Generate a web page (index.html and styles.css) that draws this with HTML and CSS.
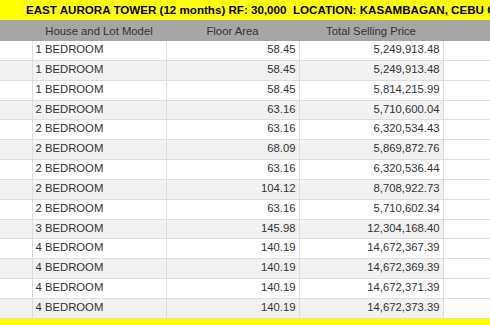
FILE: index.html
```html
<!DOCTYPE html>
<html lang="en">
<head>
  <meta charset="UTF-8" />
  <title>East Aurora Tower</title>
  <link rel="stylesheet" href="styles.css">
</head>
<body>
  <div class="title-bar">EAST AURORA TOWER (12 months) RF: 30,000&nbsp; LOCATION: KASAMBAGAN, CEBU CITY</div>
  <table class="price-list">
    <colgroup>
      <col class="c-idx">
      <col class="c-model">
      <col class="c-area">
      <col class="c-price">
      <col>
    </colgroup>
    <thead>
      <tr>
        <th></th>
        <th>House and Lot Model</th>
        <th>Floor Area</th>
        <th>Total Selling Price</th>
        <th></th>
      </tr>
    </thead>
    <tbody>
      <tr><td></td><td>1 BEDROOM</td><td class="num">58.45</td><td class="num">5,249,913.48</td><td class="blank"></td></tr>
      <tr><td></td><td>1 BEDROOM</td><td class="num">58.45</td><td class="num">5,249,913.48</td><td class="blank"></td></tr>
      <tr><td></td><td>1 BEDROOM</td><td class="num">58.45</td><td class="num">5,814,215.99</td><td class="blank"></td></tr>
      <tr><td></td><td>2 BEDROOM</td><td class="num">63.16</td><td class="num">5,710,600.04</td><td class="blank"></td></tr>
      <tr><td></td><td>2 BEDROOM</td><td class="num">63.16</td><td class="num">6,320,534.43</td><td class="blank"></td></tr>
      <tr><td></td><td>2 BEDROOM</td><td class="num">68.09</td><td class="num">5,869,872.76</td><td class="blank"></td></tr>
      <tr><td></td><td>2 BEDROOM</td><td class="num">63.16</td><td class="num">6,320,536.44</td><td class="blank"></td></tr>
      <tr><td></td><td>2 BEDROOM</td><td class="num">104.12</td><td class="num">8,708,922.73</td><td class="blank"></td></tr>
      <tr><td></td><td>2 BEDROOM</td><td class="num">63.16</td><td class="num">5,710,602.34</td><td class="blank"></td></tr>
      <tr><td></td><td>3 BEDROOM</td><td class="num">145.98</td><td class="num">12,304,168.40</td><td class="blank"></td></tr>
      <tr><td></td><td>4 BEDROOM</td><td class="num">140.19</td><td class="num">14,672,367.39</td><td class="blank"></td></tr>
      <tr><td></td><td>4 BEDROOM</td><td class="num">140.19</td><td class="num">14,672,369.39</td><td class="blank"></td></tr>
      <tr><td></td><td>4 BEDROOM</td><td class="num">140.19</td><td class="num">14,672,371.39</td><td class="blank"></td></tr>
      <tr><td></td><td>4 BEDROOM</td><td class="num">140.19</td><td class="num">14,672,373.39</td><td class="blank"></td></tr>
    </tbody>
  </table>
  <div class="title-bar">&nbsp;</div>
</body>
</html>
```

FILE: styles.css
```css
html, body {
  margin: 0;
  overflow: hidden;
}

body {
  font-family: "Liberation Sans", Arial, sans-serif;
  font-size: 11.3px;
  color: #333;
  background: #fff;
}

.title-bar {
  height: 20px;
  line-height: 20px;
  background: #ffff00;
  color: #000;
  font-size: 11.6px;
  font-weight: bold;
  white-space: nowrap;
  padding-left: 26px;
}

.price-list {
  border-collapse: collapse;
  table-layout: fixed;
  width: 600px;
}

.c-idx { width: 32px; }
.c-model { width: 134px; }
.c-area { width: 133px; }
.c-price { width: 144px; }

.price-list th {
  height: 21px;
  padding: 0;
  background: #a6a6a6;
  color: #333;
  font-weight: normal;
  text-align: center;
  vertical-align: middle;
}

.price-list td {
  height: 16.85px;
  line-height: 13px;
  padding: 2px 3px 0;
  border: 1px solid #dedede;
  border-top: none;
  vertical-align: top;
  white-space: nowrap;
}

.price-list td:first-child {
  border-left: none;
}

.price-list tbody tr:nth-child(even) td {
  background: #f2f2f2;
}

.price-list tbody tr:nth-child(even) td.blank {
  background: #fff;
}

.num {
  text-align: right;
}
```
